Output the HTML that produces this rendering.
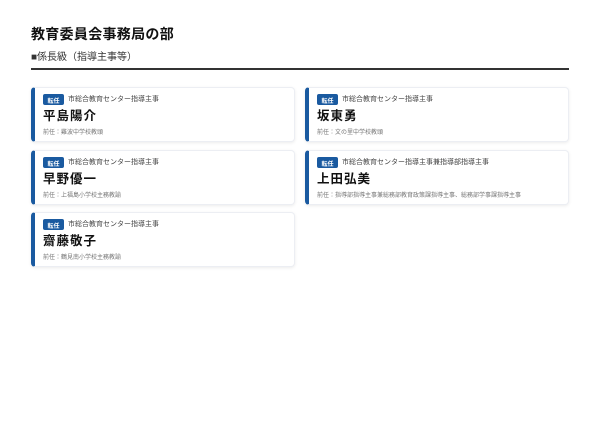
<!DOCTYPE html>
<html><head><meta charset="utf-8"><style>
*{margin:0;padding:0;box-sizing:border-box}
body{width:600px;height:424px;background:#fff;font-family:"Liberation Sans","Noto Sans CJK JP",sans-serif;color:#111;position:relative;overflow:hidden}
h1{position:absolute;left:31px;top:24px;font-size:14px;font-weight:700;letter-spacing:0.3px}
.sub{position:absolute;left:31px;top:48px;font-size:10px;color:#333}
.line{position:absolute;left:31px;top:68px;width:538px;height:2px;background:#333}
.card{position:absolute;width:264px;height:55px;background:#fff;border:1px solid #eceef3;border-left:4px solid #1a5aa0;border-radius:4px;box-shadow:0 1px 3px rgba(0,0,0,0.08)}
.badge{position:absolute;left:8px;top:6px;width:21px;height:11px;background:#1a5aa0;color:#fff;font-size:6px;font-weight:700;display:flex;align-items:center;justify-content:center;border-radius:2px;padding-top:1px}
.role{position:absolute;left:33px;top:6px;font-size:7px;line-height:11px;color:#444;white-space:nowrap}
.name{position:absolute;left:8px;top:20px;font-size:12.5px;font-weight:700;letter-spacing:1px;line-height:16px}
.prev{position:absolute;left:8px;top:39px;font-size:6px;color:#777;white-space:nowrap}
</style></head><body>
<h1>教育委員会事務局の部</h1>
<div class="sub">■係長級（指導主事等）</div>
<div class="line"></div>
<div class="card" style="left:31px;top:87px"><div class="badge">転任</div><div class="role">市総合教育センター指導主事</div><div class="name">平島陽介</div><div class="prev">前任：難波中学校教頭</div></div>
<div class="card" style="left:305px;top:87px"><div class="badge">転任</div><div class="role">市総合教育センター指導主事</div><div class="name">坂東勇</div><div class="prev">前任：文の里中学校教頭</div></div>
<div class="card" style="left:31px;top:150px"><div class="badge">転任</div><div class="role">市総合教育センター指導主事</div><div class="name">早野優一</div><div class="prev">前任：上福島小学校主務教諭</div></div>
<div class="card" style="left:305px;top:150px"><div class="badge">転任</div><div class="role">市総合教育センター指導主事兼指導部指導主事</div><div class="name">上田弘美</div><div class="prev">前任：指導部指導主事兼総務部教育政策課指導主事、総務部学事課指導主事</div></div>
<div class="card" style="left:31px;top:212px"><div class="badge">転任</div><div class="role">市総合教育センター指導主事</div><div class="name">齋藤敬子</div><div class="prev">前任：鶴見南小学校主務教諭</div></div>
</body></html>
